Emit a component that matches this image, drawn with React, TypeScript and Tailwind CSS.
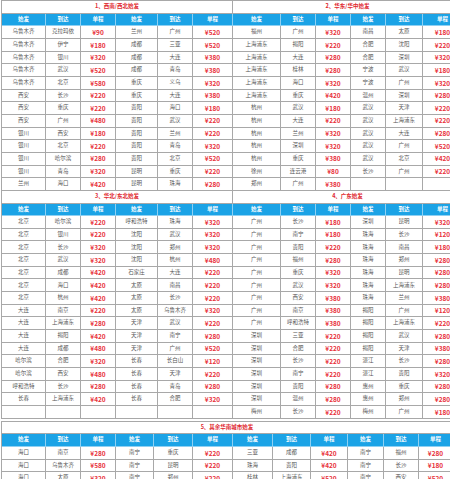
import React from 'react';

type Row = string[];

const t1: Row[] = [
  ['乌鲁木齐', '克拉玛依', '¥90', '兰州', '广州', '¥520'],
  ['乌鲁木齐', '伊宁', '¥180', '成都', '三亚', '¥520'],
  ['乌鲁木齐', '银川', '¥320', '成都', '大连', '¥380'],
  ['乌鲁木齐', '武汉', '¥520', '成都', '青岛', '¥380'],
  ['乌鲁木齐', '北京', '¥580', '重庆', '义乌', '¥320'],
  ['西安', '长沙', '¥220', '重庆', '大连', '¥380'],
  ['西安', '重庆', '¥220', '贵阳', '海口', '¥180'],
  ['西安', '广州', '¥480', '贵阳', '武汉', '¥220'],
  ['银川', '西安', '¥180', '贵阳', '兰州', '¥220'],
  ['银川', '北京', '¥220', '贵阳', '青岛', '¥320'],
  ['银川', '哈尔滨', '¥280', '贵阳', '北京', '¥520'],
  ['银川', '青岛', '¥320', '昆明', '重庆', '¥220'],
  ['兰州', '海口', '¥420', '昆明', '珠海', '¥280'],
];

const t2: Row[] = [
  ['福州', '广州', '¥320', '南昌', '太原', '¥180'],
  ['上海浦东', '揭阳', '¥220', '合肥', '沈阳', '¥220'],
  ['上海浦东', '大连', '¥280', '合肥', '深圳', '¥320'],
  ['上海浦东', '桂林', '¥280', '宁波', '武汉', '¥180'],
  ['上海浦东', '海口', '¥320', '宁波', '广州', '¥320'],
  ['上海浦东', '重庆', '¥420', '温州', '深圳', '¥280'],
  ['杭州', '武汉', '¥180', '武汉', '天津', '¥220'],
  ['杭州', '大连', '¥220', '武汉', '上海浦东', '¥220'],
  ['杭州', '兰州', '¥320', '武汉', '大连', '¥280'],
  ['杭州', '深圳', '¥320', '武汉', '广州', '¥520'],
  ['杭州', '重庆', '¥380', '武汉', '北京', '¥420'],
  ['徐州', '连云港', '¥80', '长沙', '广州', '¥220'],
  ['郑州', '广州', '¥380', '', '', ''],
];

const t3: Row[] = [
  ['北京', '哈尔滨', '¥220', '呼和浩特', '珠海', '¥320'],
  ['北京', '银川', '¥220', '沈阳', '武汉', '¥320'],
  ['北京', '长沙', '¥320', '沈阳', '郑州', '¥320'],
  ['北京', '武汉', '¥320', '沈阳', '杭州', '¥480'],
  ['北京', '成都', '¥420', '石家庄', '大连', '¥220'],
  ['北京', '海口', '¥420', '太原', '南昌', '¥220'],
  ['北京', '杭州', '¥420', '太原', '长沙', '¥220'],
  ['大连', '南京', '¥220', '太原', '乌鲁木齐', '¥320'],
  ['大连', '上海浦东', '¥280', '天津', '武汉', '¥220'],
  ['大连', '揭阳', '¥420', '天津', '南宁', '¥280'],
  ['大连', '成都', '¥480', '天津', '广州', '¥520'],
  ['哈尔滨', '合肥', '¥320', '长春', '长白山', '¥120'],
  ['哈尔滨', '西安', '¥480', '长春', '天津', '¥220'],
  ['呼和浩特', '长沙', '¥280', '长春', '青岛', '¥280'],
  ['长春', '上海浦东', '¥420', '长春', '合肥', '¥320'],
  ['', '', '', '', '', ''],
];

const t4: Row[] = [
  ['广州', '长沙', '¥180', '深圳', '昆明', '¥320'],
  ['广州', '南宁', '¥180', '珠海', '长沙', '¥120'],
  ['广州', '贵阳', '¥220', '珠海', '南昌', '¥180'],
  ['广州', '福州', '¥280', '珠海', '郑州', '¥280'],
  ['广州', '重庆', '¥320', '珠海', '昆明', '¥280'],
  ['广州', '武汉', '¥320', '珠海', '上海浦东', '¥280'],
  ['广州', '西安', '¥380', '珠海', '兰州', '¥380'],
  ['广州', '南京', '¥380', '揭阳', '广州', '¥120'],
  ['广州', '呼和浩特', '¥380', '揭阳', '上海浦东', '¥220'],
  ['深圳', '三亚', '¥220', '揭阳', '武汉', '¥280'],
  ['深圳', '合肥', '¥220', '揭阳', '天津', '¥380'],
  ['深圳', '长沙', '¥220', '湛江', '长沙', '¥280'],
  ['深圳', '南宁', '¥220', '湛江', '贵阳', '¥320'],
  ['深圳', '贵阳', '¥280', '惠州', '重庆', '¥280'],
  ['深圳', '温州', '¥280', '惠州', '郑州', '¥280'],
  ['梅州', '长沙', '¥220', '梅州', '广州', '¥180'],
];

const t5: Row[] = [
  ['海口', '南京', '¥280', '南宁', '重庆', '¥220', '三亚', '成都', '¥420', '南宁', '福州', '¥280'],
  ['海口', '乌鲁木齐', '¥580', '南宁', '昆明', '¥220', '珠海', '贵阳', '¥420', '南宁', '长沙', '¥180'],
  ['海口', '太原', '¥320', '南宁', '郑州', '¥220', '桂林', '上海浦东', '¥520', '南宁', '西安', '¥520'],
];

const head = ['始发', '到达', '单程', '始发', '到达', '单程'];

function Cells({ row, header }: { row: Row; header?: boolean }) {
  return (
    <>
      {row.map((c, i) =>
        header ? (
          <div
            key={i}
            className="bg-[#1ba3e6] border-r border-b border-[#8fd0f2] flex items-center justify-center text-white text-[5.5px] font-bold leading-none"
          >
            {c}
          </div>
        ) : c.startsWith('¥') ? (
          <div
            key={i}
            className="border-r border-b border-[#a8a8a8] flex items-center justify-center text-[#e8323c] text-[6.5px] font-bold leading-none"
          >
            {c}
          </div>
        ) : (
          <div
            key={i}
            className="border-r border-b border-[#a8a8a8] flex items-center justify-center text-[#555] text-[5.5px] leading-none whitespace-nowrap"
          >
            {c}
          </div>
        ),
      )}
    </>
  );
}

function Title({ text, span }: { text: string; span: string }) {
  return (
    <div className={`${span} border-r border-b border-[#a8a8a8] flex items-center justify-center text-[#e0282f] text-[5.5px] font-bold leading-none bg-white`}>
      {text}
    </div>
  );
}

export default function App() {
  return (
    <div className="w-[450px] h-[479px] overflow-hidden bg-white pl-px font-['Noto_Sans_CJK_SC','Noto_Sans',sans-serif]">
      <div className="flex w-[470px]">
        {/* left column */}
        <div className="flex flex-col">
          <div className="grid grid-cols-[44px_35px_35px_42px_35px_40px] auto-rows-[12.67px] border-l border-t border-[#a8a8a8]">
            <Title text="1、西南/西北始发" span="col-span-6" />
            <Cells row={head} header />
            {t1.map((r, i) => (
              <Cells key={i} row={r} />
            ))}
          </div>
          <div className="grid grid-cols-[44px_35px_35px_42px_35px_40px] auto-rows-[12.67px] border-l border-[#a8a8a8]">
            <Title text="3、华北/东北始发" span="col-span-6" />
            <Cells row={head} header />
            {t3.map((r, i) => (
              <Cells key={i} row={r} />
            ))}
          </div>
        </div>
        {/* right column */}
        <div className="flex flex-col">
          <div className="grid grid-cols-[48px_35px_35px_35px_37px_40px] auto-rows-[12.67px] border-t border-[#a8a8a8]">
            <Title text="2、华东/华中始发" span="col-span-6" />
            <Cells row={head} header />
            {t2.map((r, i) => (
              <Cells key={i} row={r} />
            ))}
          </div>
          <div className="grid grid-cols-[48px_35px_35px_35px_37px_40px] auto-rows-[12.67px]">
            <Title text="4、广东始发" span="col-span-6" />
            <Cells row={head} header />
            {t4.map((r, i) => (
              <Cells key={i} row={r} />
            ))}
          </div>
        </div>
      </div>
      <div className="mt-[2px] w-[470px] grid grid-cols-[44px_35px_35px_38px_39px_40px_40px_38px_37px_36px_35px_34px] auto-rows-[12.67px] border-l border-t border-[#a8a8a8]">
        <Title text="5、其余华南城市始发" span="col-span-12" />
        <Cells row={[...head, ...head]} header />
        {t5.map((r, i) => (
          <Cells key={i} row={r} />
        ))}
      </div>
    </div>
  );
}
